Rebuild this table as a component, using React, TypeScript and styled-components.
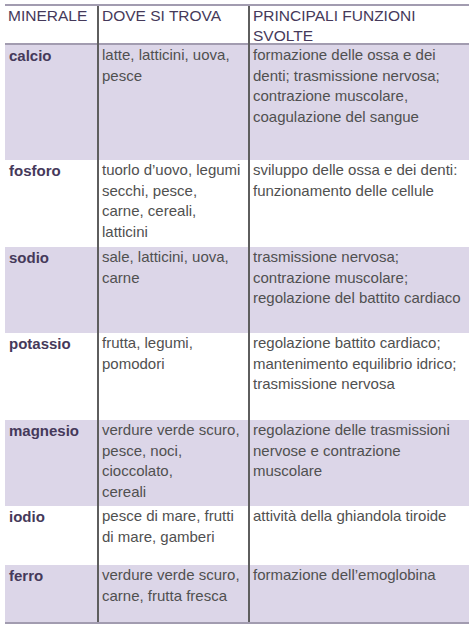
import React from "react";
import styled, { createGlobalStyle } from "styled-components";

const GlobalStyle = createGlobalStyle`
  html, body { margin: 0; padding: 0; background: #ffffff; }
  body { font-family: "Liberation Sans", Arial, sans-serif; }
`;

const Page = styled.div`
  padding: 4px 5px 0 5px;
`;

const Table = styled.div`
  width: 464px;
  display: flex;
  flex-direction: column;
  border-top: 2px solid #a29cb0;
  border-bottom: 2px solid #a29cb0;
`;

const Row = styled.div<{ $h: number; $shaded?: boolean; $header?: boolean }>`
  display: grid;
  grid-template-columns: 92px 151px 221px;
  height: ${(p) => p.$h}px;
  box-sizing: border-box;
  background: ${(p) => (p.$shaded ? "#dcd6e8" : "#ffffff")};
  border-bottom: ${(p) => (p.$header ? "2px solid #a29cb0" : "none")};
`;

const Cell = styled.div<{ $divider?: boolean }>`
  padding: 0 0 0 3px;
  border-left: ${(p) => (p.$divider ? "2px solid #5e5e5e" : "none")};
  box-sizing: border-box;
`;

const HeadText = styled.div`
  font-size: 15.5px;
  line-height: 20px;
  color: #45395a;
  white-space: nowrap;
`;

const Mineral = styled.div`
  font-size: 15px;
  line-height: 21px;
  font-weight: bold;
  color: #45395a;
  padding-left: 1px;
`;

const Line = styled.div`
  font-size: 15px;
  line-height: 20.7px;
  color: #505050;
  white-space: nowrap;
`;

type Item = { name: string; where: string[]; fn: string[]; h: number };

const rows: Item[] = [
  {
    name: "calcio",
    where: ["latte, latticini, uova,", "pesce"],
    fn: [
      "formazione delle ossa e dei",
      "denti; trasmissione nervosa;",
      "contrazione muscolare,",
      "coagulazione del sangue",
    ],
    h: 115,
  },
  {
    name: "fosforo",
    where: ["tuorlo d\u2019uovo, legumi", "secchi, pesce,", "carne, cereali,", "latticini"],
    fn: ["sviluppo delle ossa e dei denti:", "funzionamento delle cellule"],
    h: 87,
  },
  {
    name: "sodio",
    where: ["sale, latticini, uova,", "carne"],
    fn: ["trasmissione nervosa;", "contrazione muscolare;", "regolazione del battito cardiaco"],
    h: 86,
  },
  {
    name: "potassio",
    where: ["frutta, legumi,", "pomodori"],
    fn: ["regolazione battito cardiaco;", "mantenimento equilibrio idrico;", "trasmissione nervosa"],
    h: 87,
  },
  {
    name: "magnesio",
    where: ["verdure verde scuro,", "pesce, noci,", "cioccolato,", "cereali"],
    fn: ["regolazione delle trasmissioni", "nervose e contrazione", "muscolare"],
    h: 86,
  },
  {
    name: "iodio",
    where: ["pesce di mare, frutti", "di mare, gamberi"],
    fn: ["attivit\u00e0 della ghiandola tiroide"],
    h: 59,
  },
  {
    name: "ferro",
    where: ["verdure verde scuro,", "carne, frutta fresca"],
    fn: ["formazione dell\u2019emoglobina"],
    h: 57,
  },
];

export default function App() {
  return (
    <>
      <GlobalStyle />
      <Page>
        <Table>
          <Row $h={39} $header>
            <Cell>
              <HeadText>MINERALE</HeadText>
            </Cell>
            <Cell $divider>
              <HeadText>DOVE SI TROVA</HeadText>
            </Cell>
            <Cell $divider>
              <HeadText>PRINCIPALI FUNZIONI</HeadText>
              <HeadText>SVOLTE</HeadText>
            </Cell>
          </Row>
          {rows.map((r, i) => (
            <Row key={r.name} $h={r.h} $shaded={i % 2 === 0}>
              <Cell>
                <Mineral>{r.name}</Mineral>
              </Cell>
              <Cell $divider>
                {r.where.map((l) => (
                  <Line key={l}>{l}</Line>
                ))}
              </Cell>
              <Cell $divider>
                {r.fn.map((l) => (
                  <Line key={l}>{l}</Line>
                ))}
              </Cell>
            </Row>
          ))}
        </Table>
      </Page>
    </>
  );
}
